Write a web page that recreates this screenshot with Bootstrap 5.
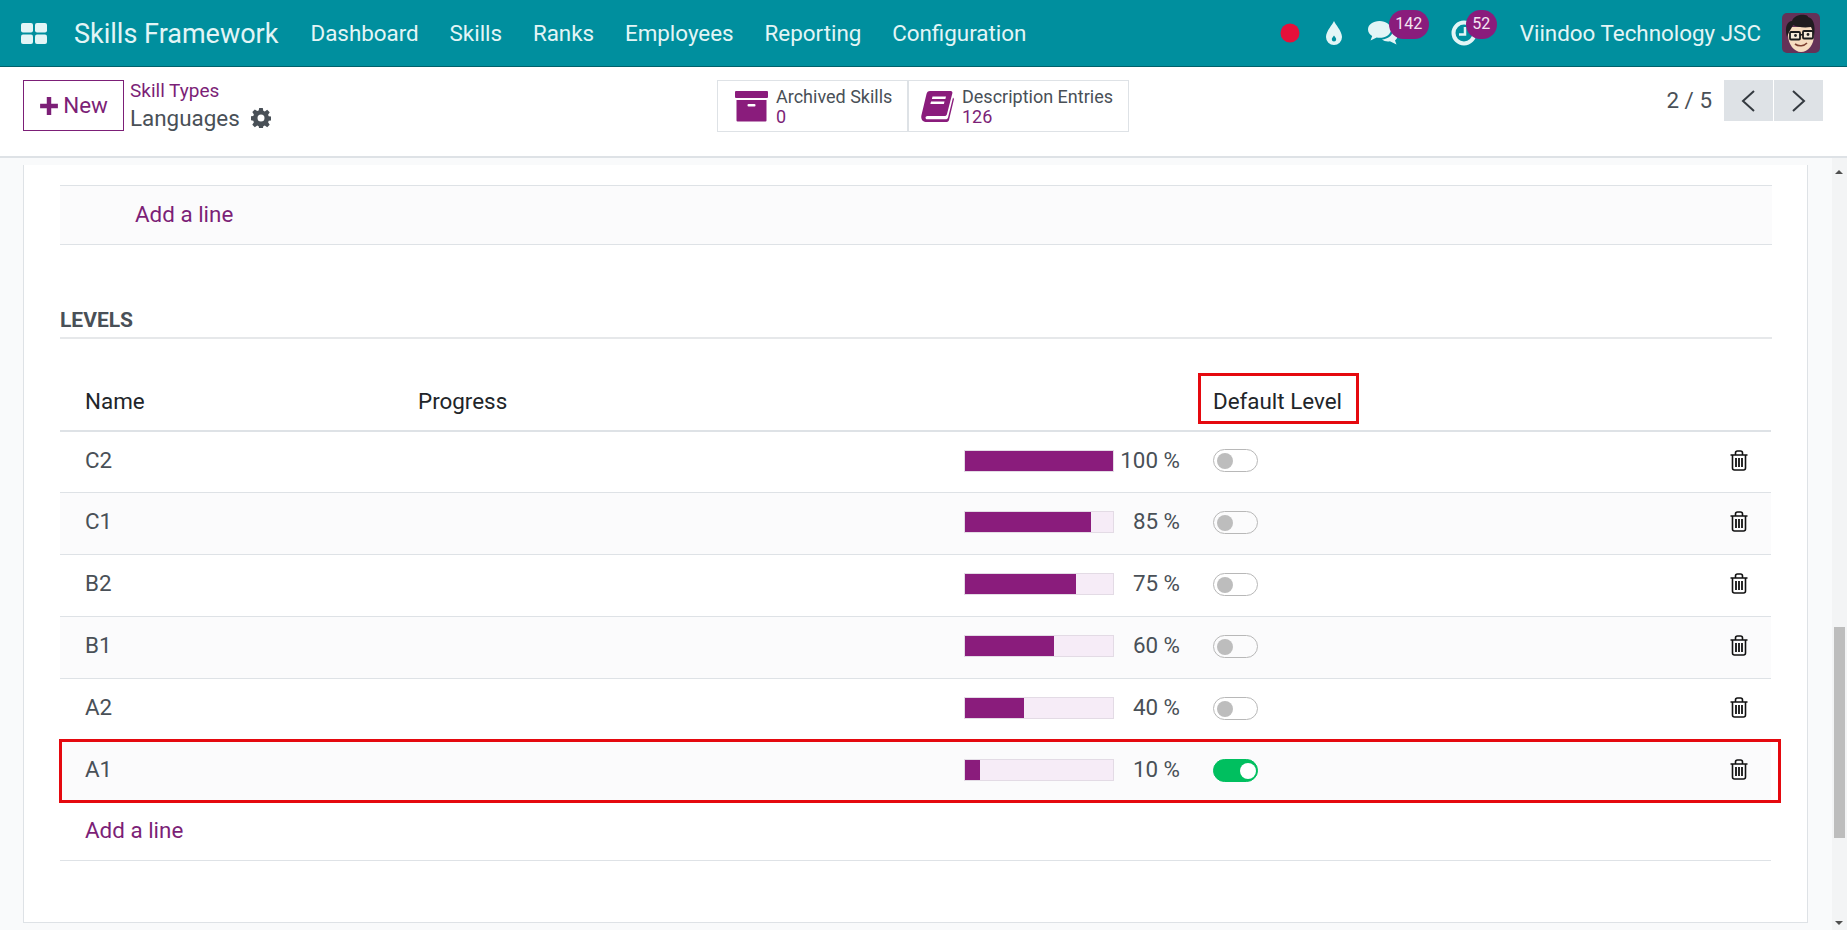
<!DOCTYPE html>
<html lang="en">
<head>
<meta charset="UTF-8">
<title>Skills Framework</title>
<link href="https://cdn.jsdelivr.net/npm/bootstrap@5.3.0/dist/css/bootstrap.min.css" rel="stylesheet">
<style>
html, body { height: 930px; overflow: hidden; }
body { font-family: Roboto, "Liberation Sans", sans-serif; font-size: 22.4px; color: #495057; background: #f9fafb; }
a { text-decoration: none; }

.app-nav { height: 67px; background: #008f9e; border-bottom: 1px solid #00616b; color: #e3f5f6; padding: 0 27px 0 21px; }
.app-nav a { color: #e3f5f6; }
.apps-icon { width: 26px; height: 21px; margin-right: 27px; }
.brand { font-size: 27px; margin-right: 32px; }
.nav-text { margin-top: 2px; }
.menu { gap: 30.8px; }
.sys-icon { position: relative; }
.sys-icon svg { display: block; }
.badge-count { position: absolute; height: 29px; border-radius: 15px; background: #8a1c7c; color: #f3e6f2; font-size: 16px; line-height: 27px; text-align: center; }

.control-panel { height: 91px; background: #fff; border-bottom: 2px solid #dee2e6; padding: 13px 24px 0 23px; }
.btn-new { width: 101px; height: 51px; border: 1px solid #7c1f77; color: #7c1f77; border-radius: 0; font-size: 22.4px; padding: 0; }
.btn-new svg { width: 20px; height: 20px; }
.crumbs { width: 200px; margin-left: 6px; margin-top: -2px; }
.crumbs a { color: #7c1f77; font-size: 19px; line-height: 26px; display: block; }
.crumb-current { font-size: 22.4px; line-height: 28px; }
.gear { margin-left: 11px; }
.stat-group { width: 412px; height: 52px; margin-left: 387px; border: 1px solid #dee2e6; }
.stat { height: 100%; line-height: 20px; font-size: 18px; padding-top: 1px; }
.stat + .stat { border-left: 2px solid #dee2e6; }
.stat b { font-weight: 400; color: #7c1f77; display: block; }
.stat-archive { width: 189px; padding-left: 17px; }
.stat-entries { padding-left: 12px; }
.pager-text { font-size: 22.4px; margin-right: 12px; }
.pager-btn { width: 49px; height: 41px; background: #dee2e6; border: 0; border-radius: 0; padding: 0; }
.pager-btn + .pager-btn { margin-left: 1px; }

.content { height: 772px; padding: 7px 25px 8px 23px; }
.scroller { position: fixed; top: 158px; right: 0; width: 15px; height: 772px; background: #f3f4f5; }
.scroller .thumb { position: absolute; top: 469px; left: 2px; width: 11px; height: 211px; background: #bdbdbd; }
.scroller .up, .scroller .down { position: absolute; left: 3px; width: 0; height: 0; border-left: 4px solid transparent; border-right: 4px solid transparent; }
.scroller .up { top: 12px; border-bottom: 4px solid #505050; }
.scroller .down { bottom: 5px; border-top: 4px solid #505050; }

.sheet { height: 758px; width: 1785px; background: #fff; border: 1px solid #dee2e6; border-top: 0; padding: 20px 35px 0 36px; }
.top-rows { height: 60px; background: #fbfbfc; border-top: 1px solid #dee2e6; border-bottom: 1px solid #dee2e6; padding-left: 75px; line-height: 57px; }
.add-line { color: #7c1f77; }
.section-title { font-size: 21px; font-weight: 700; color: #495057; margin-top: 61px; padding-bottom: 3px; line-height: 28px; border-bottom: 2px solid #e6e8ea; }

.levels { table-layout: fixed; width: 1711px; margin-top: 0; margin-bottom: 0; }
.levels th, .levels td { padding: 0 0 0 25px; vertical-align: middle; border-bottom: 1px solid #dee2e6; }
.levels thead th { height: 92px; font-weight: 400; color: #212529; padding-top: 34px; border-bottom: 2px solid #dee2e6; }
.levels tbody td { height: 62px; color: #495057; background: #fff; padding-bottom: 2px; }
.levels tbody tr:first-child td { height: 61px; }
.levels tbody tr:nth-child(even) td { background: #fbfbfc; }
.levels tbody tr.add-row td { background: #fff; height: 58px; padding-bottom: 0; }
.levels tbody td.progress-cell { padding-right: 8px; }
.levels tbody td.trash-cell { padding-right: 23px; padding-bottom: 5px; }
.trash { display: inline-block; vertical-align: middle; }
.bar { width: 150px; height: 22px; background: #f6ecf7; border: 1px solid #e3dbe5; }
.bar-fill { height: 100%; background: #8a1c7c; }
.pct { width: 66px; text-align: right; }
.toggle { width: 45px; height: 23px; border: 1px solid #b8b8b8; border-radius: 12px; padding: 3px; }
.toggle span { display: block; width: 16px; height: 16px; border-radius: 50%; background: #bdbdbd; }
.toggle.on { background: #00bf5f; border-color: #00bf5f; }
.toggle.on span { background: #fff; margin-left: 23px; }

.callout { position: absolute; border: 3px solid #e5090f; pointer-events: none; }
.callout-head { left: 1198px; top: 373px; width: 161px; height: 51px; }
.callout-row { left: 59px; top: 739px; width: 1722px; height: 64px; }
</style>
</head>
<body>
<nav class="app-nav d-flex align-items-center">
    <svg class="apps-icon" viewBox="0 0 26 21" fill="#e3f5f6"><rect width="12" height="9.5" rx="2"/><rect x="14" width="12" height="9.5" rx="2"/><rect y="11.5" width="12" height="9.5" rx="2"/><rect x="14" y="11.5" width="12" height="9.5" rx="2"/></svg>
    <span class="brand nav-text">Skills Framework</span>
    <div class="menu nav-text d-flex">
        <a href="#">Dashboard</a>
        <a href="#">Skills</a>
        <a href="#">Ranks</a>
        <a href="#">Employees</a>
        <a href="#">Reporting</a>
        <a href="#">Configuration</a>
    </div>
    <div class="ms-auto d-flex align-items-center">
        <svg width="20" height="20" viewBox="0 0 20 20"><circle cx="10" cy="10" r="9.5" fill="#e5103a"/></svg>
        <svg class="ms-4" width="20" height="26" viewBox="0 0 20 26"><path fill="#e3f5f6" d="M10 1C9 4 2 11 2 17a8 8 0 0 0 16 0C18 11 11 4 10 1z"/><path fill="#008f9e" d="M10 15.500c-1.400 1.800-2.200 2.800-2.200 3.800a2.200 2.200 0 0 0 4.400 0c0-1-.8-2-2.200-3.800z"/></svg>
        <div class="sys-icon ms-4">
            <svg width="30" height="24" viewBox="0 0 30 24">
                <path fill="#e3f5f6" d="M11.500 0C5 0 0 3.600 0 8.500c0 2.800 1.700 5 4.200 6.500L2.500 19.500l6.200-3c1 .2 1.900.3 2.800.3 6.500 0 11.500-3.600 11.500-8.300S18 0 11.500 0z"/>
                <path fill="#e3f5f6" d="M24.500 10c.2 4.500-4.500 8-10.500 8.500 1.500 1.300 3.700 2 6 2 .6 0 1.300 0 1.900-.2l6.600 3.200-1.500-4c1.500-1.200 2.500-2.800 2.500-4.500 0-2-1.500-3.800-4.500-5z"/>
            </svg>
            <span class="badge-count" style="left:21px;top:-11px;width:40px">142</span>
        </div>
        <div class="sys-icon" style="margin-left:53px">
            <svg width="26" height="26" viewBox="0 0 26 26"><circle cx="13" cy="13" r="10.500" fill="none" stroke="#e3f5f6" stroke-width="4"/><path d="M14 7v7.500H8" fill="none" stroke="#e3f5f6" stroke-width="2.500"/></svg>
            <span class="badge-count" style="left:15px;top:-10px;width:31px">52</span>
        </div>
        <span class="nav-text" style="margin-left:43px">Viindoo Technology JSC</span>
        <svg style="margin-left:21px" width="38" height="40" viewBox="0 0 38 40">
            <rect width="38" height="40" rx="5" fill="#643258"/>
            <path d="M6 22c0 9 6 17 13 17s13-7 13-17l-1-8H7z" fill="#f6dcc0"/>
            <path d="M5 24C2 13 6 8 10 8c1-4 7-7 13-6 2 0 3 1 3 2 5 1 8 8 6 19-1-4-2-7-3-9-7 1-14 0-18-2-1 3-4 6-6 12z" fill="#201c20"/>
            <rect x="8" y="19" width="10" height="7.500" rx="1" fill="#f5ead9" stroke="#1c1c1c" stroke-width="1.800"/>
            <rect x="21" y="18" width="10" height="7.500" rx="1" fill="#f5ead9" stroke="#1c1c1c" stroke-width="1.800"/>
            <path d="M18 22l3-.5" stroke="#1c1c1c" stroke-width="1.500"/>
            <circle cx="13.500" cy="22.500" r="1.400" fill="#222"/><circle cx="26" cy="21.500" r="1.400" fill="#222"/>
            <path d="M13 31c4 3 9 2 12-1" fill="none" stroke="#7d3f30" stroke-width="1.600"/>
        </svg>
    </div>
</nav>

<div class="control-panel d-flex align-items-start">
    <button class="btn btn-new d-flex align-items-center justify-content-center gap-1">
        <svg viewBox="0 0 18 18" fill="#7c1f77"><path d="M7 1h4v6h6v4h-6v6H7v-6H1V7h6z"/></svg>New
    </button>
    <div class="crumbs">
        <a href="#">Skill Types</a>
        <div class="crumb-current d-flex align-items-center">Languages
            <svg class="gear" width="20" height="20" viewBox="0 0 20 20" fill="#495057"><path fill-rule="evenodd" d="M8.200 0h3.600l.5 2.800 1.500.6L16.200 1.800l2.500 2.500-1.600 2.400.6 1.500 2.800.5v3.600l-2.800.5-.6 1.500 1.600 2.400-2.500 2.500-2.400-1.600-1.500.6-.5 2.800H8.200l-.5-2.800-1.500-.6-2.400 1.600-2.500-2.500 1.600-2.400-.6-1.500L-.5 12V8.400l2.800-.5.6-1.500L1.300 4 3.800 1.500l2.400 1.600 1.500-.6zM10 6.500a3.500 3.500 0 1 0 0 7 3.500 3.500 0 0 0 0-7z"/></svg>
        </div>
    </div>
    <div class="stat-group d-flex">
        <div class="stat stat-archive d-flex align-items-center">
            <svg width="33" height="31" viewBox="0 0 33 31" fill="#8a1c7c"><rect width="33" height="7" rx="1"/><path d="M1.500 9h30v20.500a1 1 0 0 1-1 1h-28a1 1 0 0 1-1-1z"/><rect x="12.500" y="13" width="8" height="2.500" rx="1" fill="#fff"/></svg>
            <div class="ms-2">Archived Skills<b>0</b></div>
        </div>
        <div class="stat stat-entries d-flex align-items-center">
            <svg width="33" height="31" viewBox="0 0 33 31" fill="#8a1c7c"><path fill-rule="evenodd" d="M9 0h20c2 0 2.700 1 2.300 2.500L26 23c-.4 1.500-1.200 2-2.500 2H6.500c-2.600 0-2.600 3.300 0 3.300h18c1.500 0 2.200-.6 2.600-2L32 6.500l1 1.500-5 21c-.4 1.400-1.400 2-3 2H6c-4.500 0-6.500-3-5.500-7L5.500 3C6 1 7 0 9 0zM11.500 5.500l-.6 2.500h13.500l.6-2.500zM10 10.500l-.6 2.500h13.500l.6-2.500z"/></svg>
            <div class="ms-2">Description Entries<b>126</b></div>
        </div>
    </div>
    <div class="ms-auto d-flex align-items-center">
        <span class="pager-text">2 / 5</span>
        <button class="btn pager-btn"><svg width="17" height="24" viewBox="0 0 17 24"><path d="M14 2 3 12l11 10" fill="none" stroke="#343a40" stroke-width="2"/></svg></button>
        <button class="btn pager-btn"><svg width="17" height="24" viewBox="0 0 17 24"><path d="m3 2 11 10L3 22" fill="none" stroke="#343a40" stroke-width="2"/></svg></button>
    </div>
</div>

<div class="content">
    <div class="sheet">
        <div class="top-rows"><a class="add-line" href="#">Add a line</a></div>
        <div class="section-title">LEVELS</div>
        <table class="table levels">
            <colgroup>
                <col style="width:333px"><col style="width:570px"><col style="width:225px"><col style="width:85px"><col style="width:498px">
            </colgroup>
            <thead>
                <tr><th>Name</th><th>Progress</th><th></th><th colspan="2">Default Level</th></tr>
            </thead>
            <tbody id="levelRows"></tbody>
        </table>
    </div>
</div>

<div class="scroller"><span class="up"></span><div class="thumb"></div><span class="down"></span></div>
<div class="callout callout-head"></div>
<div class="callout callout-row"></div>

<script src="https://cdn.jsdelivr.net/npm/bootstrap@5.3.0/dist/js/bootstrap.bundle.min.js"></script>
<script>
    const niveles = [['C2', 100], ['C1', 85], ['B2', 75], ['B1', 60], ['A2', 40], ['A1', 10]];
    const papelera = '<svg class="trash" width="18" height="21" viewBox="0 0 18 21"><path d="M.5 5h17M5.500 5V3c0-1.200.8-2 2-2h3c1.200 0 2 .8 2 2v2M2.500 5v13c0 1.200.8 2 2 2h9c1.200 0 2-.8 2-2V5" fill="none" stroke="#111" stroke-width="1.600"/><path d="M6 8v9M9 8v9M12 8v9" fill="none" stroke="#111" stroke-width="1.800"/></svg>';
    let filas = '';
    niveles.forEach(function(n) {
        filas += '<tr><td>' + n[0] + '</td><td colspan="2" class="progress-cell"><div class="d-flex align-items-center justify-content-end">' +
            '<div class="bar"><div class="bar-fill" style="width:' + n[1] + '%"></div></div>' +
            '<div class="pct">' + n[1] + ' %</div></div></td><td><div class="toggle' + (n[0] === 'A1' ? ' on' : '') + '"><span></span></div></td>' +
            '<td class="text-end trash-cell">' + papelera + '</td></tr>';
    });
    filas += '<tr class="add-row"><td colspan="5"><a class="add-line" href="#">Add a line</a></td></tr>';
    document.getElementById('levelRows').innerHTML = filas;
</script>
</body>
</html>
